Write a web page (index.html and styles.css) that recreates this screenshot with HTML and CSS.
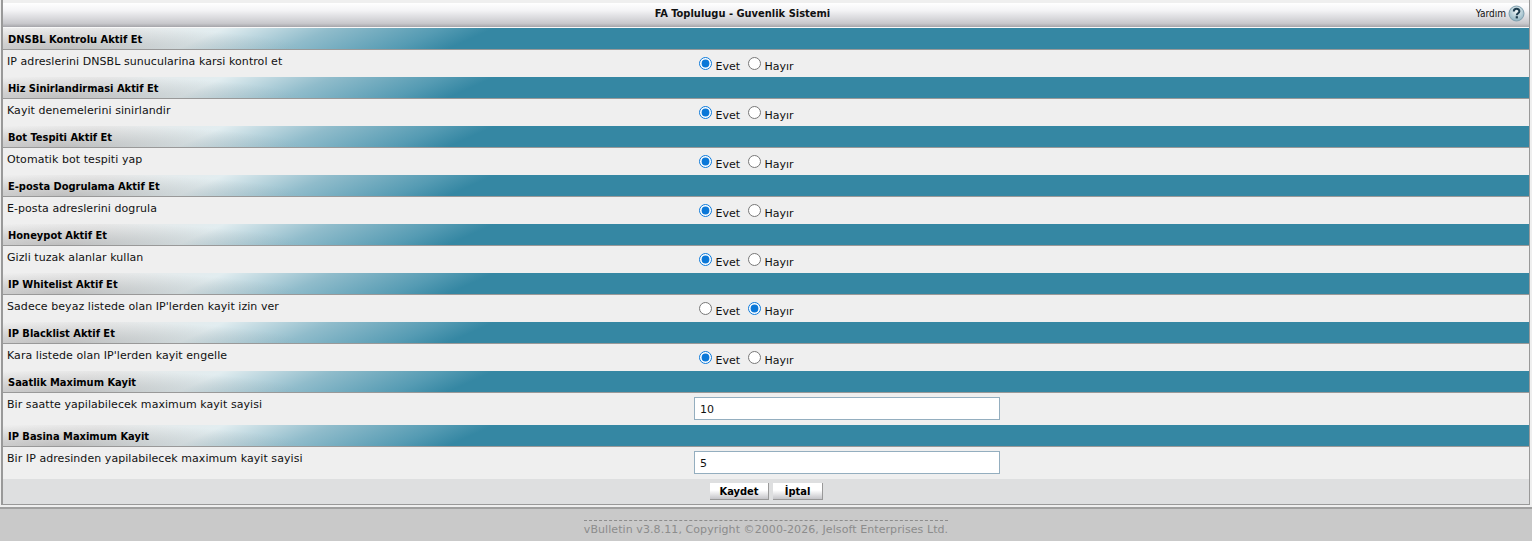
FILE: index.html
```html
<!DOCTYPE html>
<html lang="tr">

<head>
    <meta charset="UTF-8">
    <link rel="stylesheet" href="styles.css">
    <title>FA Toplulugu - Guvenlik Sistemi</title>
</head>

<body>
    <div class="page">
        <div class="panel">
            <div class="tcat">
                <div class="tcat-title">FA Toplulugu - Guvenlik Sistemi</div>
                <div class="help">Yardım
                    <svg class="help-icon" width="17" height="17" viewBox="0 0 17 17">
                        <defs>
                            <radialGradient id="helpfill" cx="50%" cy="35%" r="65%">
                                <stop offset="0" stop-color="#eef4f6" />
                                <stop offset="1" stop-color="#8fb4c2" />
                            </radialGradient>
                        </defs>
                        <circle cx="8.5" cy="8.5" r="7.5" fill="url(#helpfill)" stroke="#7f9fae" />
                        <path d="M5.8 6.4c0-3.4 5.6-3.4 5.6-.2 0 2-2.6 2-2.6 4" fill="none" stroke="#1d3c4e" stroke-width="2" />
                        <rect x="7.7" y="11.2" width="2.2" height="2.2" fill="#1d3c4e" />
                    </svg>
                </div>
            </div>

            <div class="thead">DNSBL Kontrolu Aktif Et</div>
            <div class="row">
                <div class="label">IP adreslerini DNSBL sunucularina karsi kontrol et</div>
                <div class="field"><label><input type="radio" name="dnsbl" checked> Evet</label><label><input type="radio" name="dnsbl"> Hayır</label></div>
            </div>

            <div class="thead">Hiz Sinirlandirmasi Aktif Et</div>
            <div class="row">
                <div class="label">Kayit denemelerini sinirlandir</div>
                <div class="field"><label><input type="radio" name="hiz" checked> Evet</label><label><input type="radio" name="hiz"> Hayır</label></div>
            </div>

            <div class="thead">Bot Tespiti Aktif Et</div>
            <div class="row">
                <div class="label">Otomatik bot tespiti yap</div>
                <div class="field"><label><input type="radio" name="bot" checked> Evet</label><label><input type="radio" name="bot"> Hayır</label></div>
            </div>

            <div class="thead">E-posta Dogrulama Aktif Et</div>
            <div class="row">
                <div class="label">E-posta adreslerini dogrula</div>
                <div class="field"><label><input type="radio" name="eposta" checked> Evet</label><label><input type="radio" name="eposta"> Hayır</label></div>
            </div>

            <div class="thead">Honeypot Aktif Et</div>
            <div class="row">
                <div class="label">Gizli tuzak alanlar kullan</div>
                <div class="field"><label><input type="radio" name="honeypot" checked> Evet</label><label><input type="radio" name="honeypot"> Hayır</label></div>
            </div>

            <div class="thead">IP Whitelist Aktif Et</div>
            <div class="row">
                <div class="label">Sadece beyaz listede olan IP'lerden kayit izin ver</div>
                <div class="field"><label><input type="radio" name="white"> Evet</label><label><input type="radio" name="white" checked> Hayır</label></div>
            </div>

            <div class="thead">IP Blacklist Aktif Et</div>
            <div class="row">
                <div class="label">Kara listede olan IP'lerden kayit engelle</div>
                <div class="field"><label><input type="radio" name="black" checked> Evet</label><label><input type="radio" name="black"> Hayır</label></div>
            </div>

            <div class="thead">Saatlik Maximum Kayit</div>
            <div class="row row-input">
                <div class="label">Bir saatte yapilabilecek maximum kayit sayisi</div>
                <div class="field"><input class="bginput" type="text" value="10"></div>
            </div>

            <div class="thead">IP Basina Maximum Kayit</div>
            <div class="row row-input">
                <div class="label">Bir IP adresinden yapilabilecek maximum kayit sayisi</div>
                <div class="field"><input class="bginput" type="text" value="5"></div>
            </div>

            <div class="submitrow">
                <button class="button" type="button">Kaydet</button>
                <button class="button" type="button">İptal</button>
            </div>
        </div>
    </div>

    <div class="copyright">
        <span>vBulletin v3.8.11, Copyright ©2000-2026, Jelsoft Enterprises Ltd.</span>
    </div>
</body>

</html>
```

FILE: styles.css
```css
* {
    box-sizing: border-box;
}

body {
    margin: 0;
    background-color: #c9c9c9;
    font-family: "DejaVu Sans", Verdana, sans-serif;
    font-size: 11px;
    color: #111;
}

.page {
    height: 509px;
    padding: 0 2px 2px 1px;
    background-color: #efefef;
    border-bottom: 2px solid #a0a0a0;
}

.panel {
    height: 505px;
    padding-top: 3px;
    border-left: 2px solid #999;
    border-right: 1px solid #999;
    border-bottom: 1px solid #999;
}

.tcat {
    display: flex;
    align-items: center;
    height: 25px;
    padding-bottom: 4px;
    border-bottom: 1px solid #f8f8f8;
    background: linear-gradient(to bottom, #fff 0%, #f4f4f6 30%, #c8c8cc 85%, #a5a5aa 100%);
}

.tcat-title {
    flex: 1;
    padding-left: 6px;
    text-align: center;
    font-family: "DejaVu Sans Condensed", "DejaVu Sans", sans-serif;
    font-weight: bold;
    color: #111;
}

.help {
    display: flex;
    align-items: center;
    gap: 2px;
    padding-right: 4px;
    font-family: "DejaVu Sans Condensed", "DejaVu Sans", sans-serif;
    font-size: 10px;
}

.thead {
    height: 22px;
    padding: 5px 0 0 5px;
    font-family: "DejaVu Sans Condensed", "DejaVu Sans", sans-serif;
    font-weight: bold;
    font-size: 11px;
    color: #000;
    background:
        radial-gradient(ellipse 240px 22px at 60px 100%, rgba(130, 130, 130, 0.4), transparent),
        linear-gradient(156deg, #f0f0f0 0, #e8e8e8 41px, #e2edf0 90px, #90bccb 134px, #559bb3 179px, #3587a3 200px, #3587a3 100%);
    border-bottom: 1px solid #999;
}

.row {
    display: flex;
    height: 27px;
    background-color: #efefef;
}

.row-input {
    height: 32px;
}

.label {
    width: 691px;
    padding: 5px 0 0 4px;
    line-height: 13px;
    letter-spacing: 0.06px;
}

.field {
    padding-top: 7px;
    flex: 1;
}

.field label {
    margin-right: 3px;
}

.field input[type="radio"] {
    margin: 0 0 0 5px;
    vertical-align: 0;
    width: 13px;
    height: 13px;
    accent-color: #0b78d8;
}

.row-input .field {
    padding-top: 4px;
}

.bginput {
    display: block;
    width: 306px;
    height: 23px;
    padding: 2px 5px 0;
    border: 1px solid #94aebf;
    background-color: #fff;
    font-family: "DejaVu Sans", Verdana, sans-serif;
    font-size: 11px;
    color: #111;
}

.submitrow {
    height: 25px;
    display: flex;
    justify-content: center;
    align-items: center;
    gap: 4px;
    background-color: #dedfe0;
}

.button {
    height: 17px;
    min-width: 50px;
    padding: 0 9px 0 10px;
    border: none;
    border-right: 1px solid #999;
    border-bottom: 1px solid #999;
    background: linear-gradient(to bottom, #fff 0%, #fff 45%, #c4c4c8 100%);
    font-family: "DejaVu Sans Condensed", "DejaVu Sans", sans-serif;
    font-weight: bold;
    font-size: 11px;
    color: #000;
}

.copyright {
    text-align: center;
    padding-top: 11px;
    color: #8c8c8c;
    font-size: 11px;
    letter-spacing: 0.08px;
}

.copyright>span {
    display: inline-block;
    border-top: 1px dashed #8c8c8c;
    padding-top: 2px;
}
```
